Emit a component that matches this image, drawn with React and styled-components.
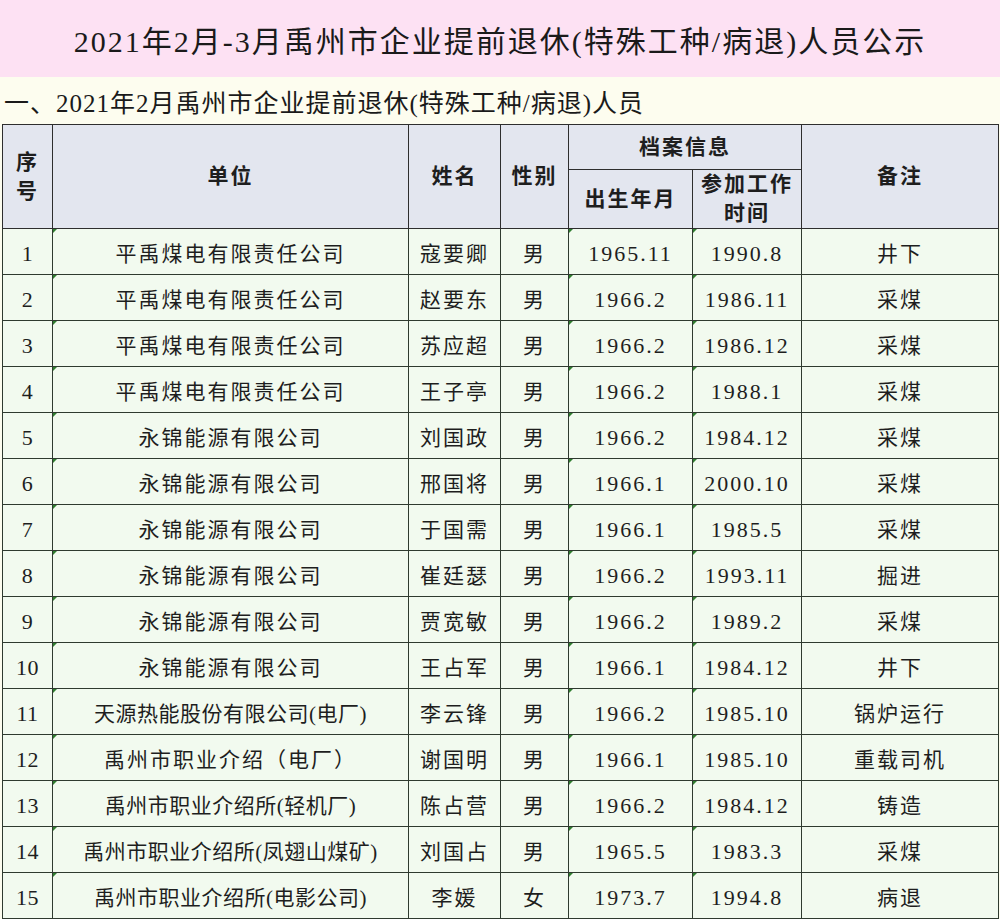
import React from "react";
import styled, { createGlobalStyle } from "styled-components";

const rows = [
  ["1", "平禹煤电有限责任公司", "寇要卿", "男", "1965.11", "1990.8", "井下"],
  ["2", "平禹煤电有限责任公司", "赵要东", "男", "1966.2", "1986.11", "采煤"],
  ["3", "平禹煤电有限责任公司", "苏应超", "男", "1966.2", "1986.12", "采煤"],
  ["4", "平禹煤电有限责任公司", "王子亭", "男", "1966.2", "1988.1", "采煤"],
  ["5", "永锦能源有限公司", "刘国政", "男", "1966.2", "1984.12", "采煤"],
  ["6", "永锦能源有限公司", "邢国将", "男", "1966.1", "2000.10", "采煤"],
  ["7", "永锦能源有限公司", "于国需", "男", "1966.1", "1985.5", "采煤"],
  ["8", "永锦能源有限公司", "崔廷瑟", "男", "1966.2", "1993.11", "掘进"],
  ["9", "永锦能源有限公司", "贾宽敏", "男", "1966.2", "1989.2", "采煤"],
  ["10", "永锦能源有限公司", "王占军", "男", "1966.1", "1984.12", "井下"],
  ["11", "天源热能股份有限公司(电厂)", "李云锋", "男", "1966.2", "1985.10", "锅炉运行"],
  ["12", "禹州市职业介绍（电厂）", "谢国明", "男", "1966.1", "1985.10", "重载司机"],
  ["13", "禹州市职业介绍所(轻机厂)", "陈占营", "男", "1966.2", "1984.12", "铸造"],
  ["14", "禹州市职业介绍所(凤翅山煤矿)", "刘国占", "男", "1965.5", "1983.3", "采煤"],
  ["15", "禹州市职业介绍所(电影公司)", "李媛", "女", "1973.7", "1994.8", "病退"],
];

const GlobalStyle = createGlobalStyle`
  html, body {
    margin: 0;
    padding: 0;
    background: #ffffff;
  }
  body {
    font-family: "Liberation Serif", "Noto Sans CJK SC", serif;
    color: #1e1e1e;
  }
`;

const Page = styled.div`
  width: 1000px;
  height: 919px;
  overflow: hidden;
  background: #fdfdef;
`;

const TitleBand = styled.h1`
  margin: 0;
  height: 77px;
  display: flex;
  align-items: center;
  justify-content: center;
  background: #fde1f3;
  font-size: 30px;
  font-weight: 400;
  letter-spacing: 2px;
  color: #1a1a1a;
`;

const SubTitle = styled.h2`
  margin: 0;
  height: 47px;
  display: flex;
  align-items: center;
  padding-left: 4px;
  background: #fdfdef;
  font-size: 25px;
  font-weight: 400;
  letter-spacing: 1px;
  color: #1a1a1a;
`;

const Table = styled.table`
  margin-left: 2px;
  width: 996px;
  border-collapse: collapse;
  table-layout: fixed;
`;

const HeadRow = styled.tr`
  height: ${(p) => p.$h}px;
  background: #e3e6ef;
`;

const Th = styled.th`
  border: 1.5px solid #2e2e2e;
  font-size: 21px;
  font-weight: 600;
  line-height: 29px;
  letter-spacing: 2px;
  text-align: center;
  padding: 0;
  color: #1e1e1e;
`;

const BodyRow = styled.tr`
  height: 46px;
  background: #f2faef;
`;

const Td = styled.td`
  position: relative;
  border: 1px solid #2f3a2f;
  font-size: ${(p) => (p.$num ? "22px" : "21px")};
  padding: ${(p) => (p.$num ? "4px 0 0" : "0")};
  letter-spacing: ${(p) => (p.$tight ? "0.5px" : "2px")};
  text-align: center;
  white-space: nowrap;
  color: #1e1e1e;

  ${(p) =>
    p.$mark &&
    `
    &::before {
      content: "";
      position: absolute;
      left: 0;
      top: 0;
      border-top: 4px solid #2f7d2f;
      border-right: 4px solid transparent;
    }
  `}
`;

const widths = [50, 356, 92, 68, 124, 109, 197];

export default function App() {
  return (
    <Page>
      <GlobalStyle />
      <TitleBand>2021年2月-3月禹州市企业提前退休(特殊工种/病退)人员公示</TitleBand>
      <SubTitle>一、2021年2月禹州市企业提前退休(特殊工种/病退)人员</SubTitle>
      <Table>
        <colgroup>
          {widths.map((w, i) => (
            <col key={i} style={{ width: w }} />
          ))}
        </colgroup>
        <thead>
          <HeadRow $h={45}>
            <Th rowSpan={2}>
              序<br />号
            </Th>
            <Th rowSpan={2}>单位</Th>
            <Th rowSpan={2}>姓名</Th>
            <Th rowSpan={2}>性别</Th>
            <Th colSpan={2}>档案信息</Th>
            <Th rowSpan={2}>备注</Th>
          </HeadRow>
          <HeadRow $h={59}>
            <Th>出生年月</Th>
            <Th>
              参加工作
              <br />
              时间
            </Th>
          </HeadRow>
        </thead>
        <tbody>
          {rows.map((r) => (
            <BodyRow key={r[0]}>
              <Td $num $tight>
                {r[0]}
              </Td>
              <Td $mark $tight={r[1].length > 12}>
                {r[1]}
              </Td>
              <Td>{r[2]}</Td>
              <Td>{r[3]}</Td>
              <Td $mark $num>
                {r[4]}
              </Td>
              <Td $mark $num>
                {r[5]}
              </Td>
              <Td>{r[6]}</Td>
            </BodyRow>
          ))}
        </tbody>
      </Table>
    </Page>
  );
}
